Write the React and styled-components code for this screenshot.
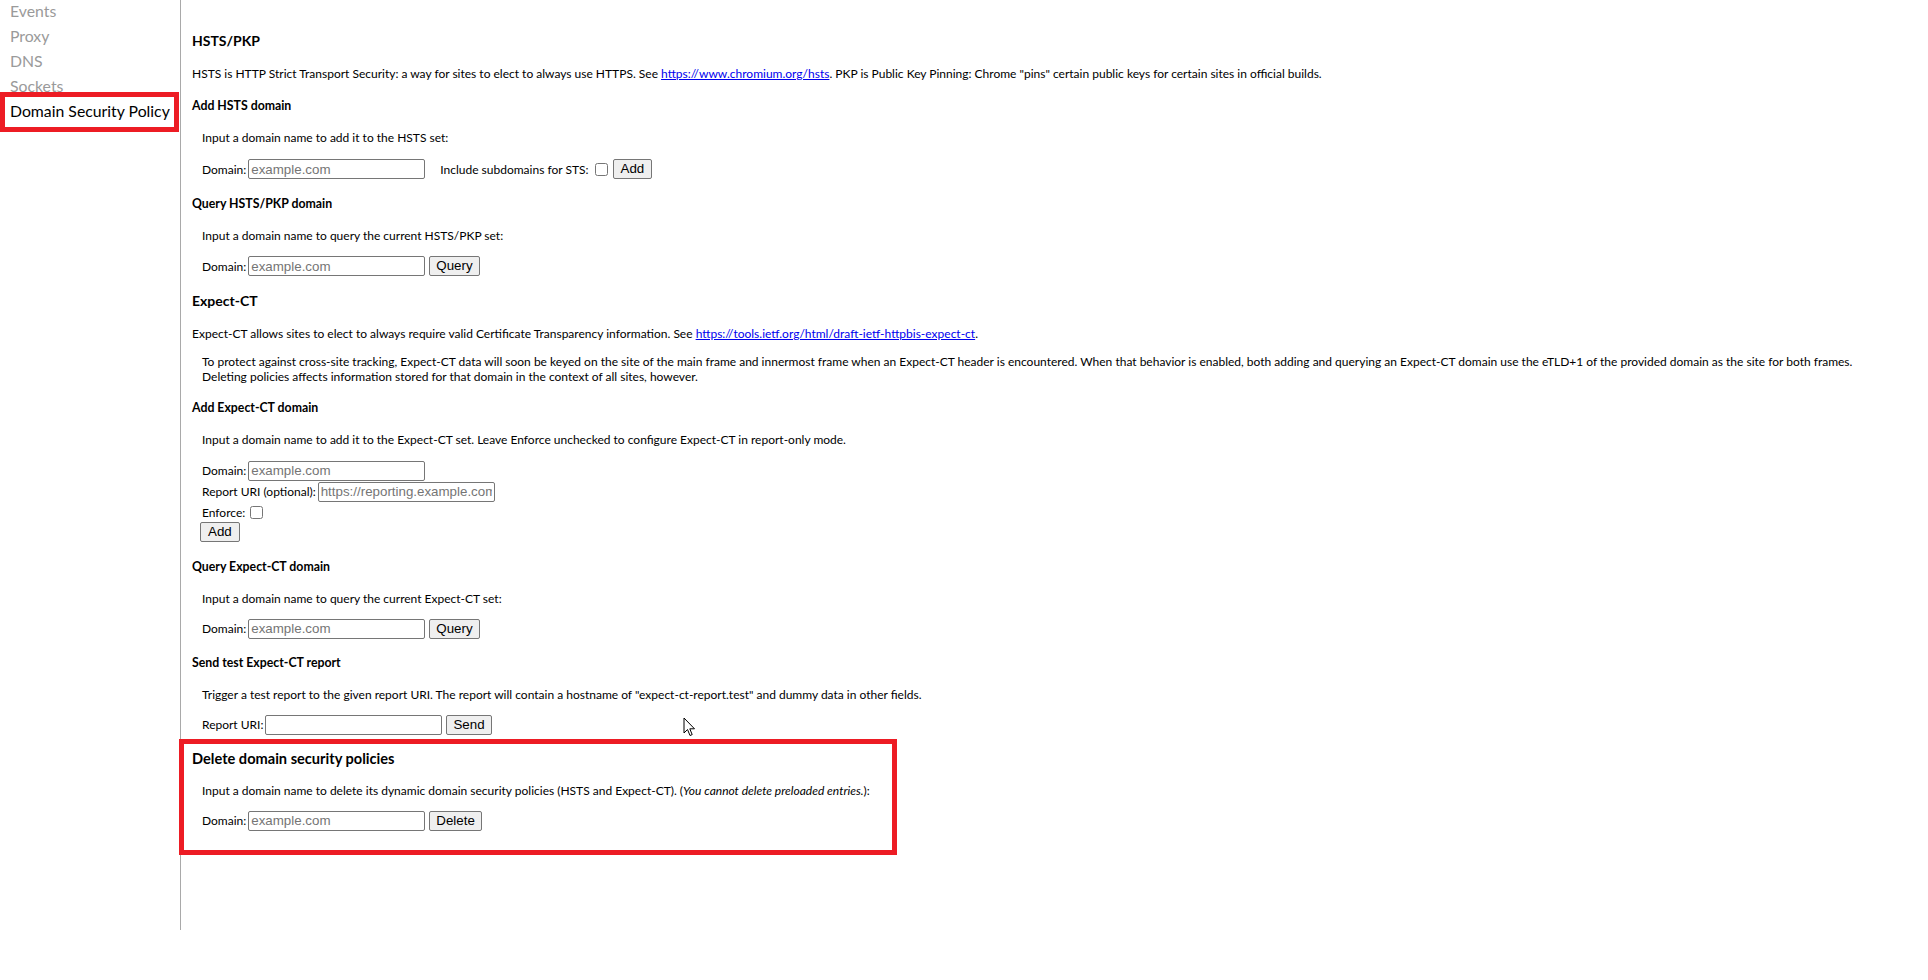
import React from 'react';
import styled, { createGlobalStyle } from 'styled-components';

const Global = createGlobalStyle`
  html, body { margin: 0; padding: 0; background: #ffffff; }
  body { font-family: Lato, "Noto Sans", sans-serif; color: #000; }
`;

const Page = styled.div`
  position: relative;
  display: flex;
  align-items: flex-start;
  width: 1928px;
  height: 980px;
  overflow: hidden;
`;

const Sidebar = styled.nav`
  flex: none;
  width: 181px;
  height: 930px;
  box-sizing: border-box;
  border-right: 1px solid #a9a9a9;
`;

const NavList = styled.div`
  margin-top: -2px;
`;

const NavItem = styled.div`
  position: relative;
  padding-left: 10px;
  font-size: 15.8px;
  line-height: 25px;
  white-space: nowrap;
  color: ${(p) => (p.$active ? '#000' : '#9a9a9a')};
`;

const Highlight = styled.div`
  position: absolute;
  box-sizing: border-box;
  border: 5px solid #ed1c24;
  pointer-events: none;
  left: ${(p) => p.$left}px;
  top: ${(p) => p.$top}px;
  width: ${(p) => p.$w}px;
  height: ${(p) => p.$h}px;
`;

const Main = styled.main`
  flex: 1;
  padding: 31px 0 0 11px;
  font-size: 12px;
`;

const H2 = styled.h2`
  margin: ${(p) => (p.$first ? 0 : 14)}px 0 0;
  font-size: 14px;
  font-weight: 700;
  line-height: 20px;
`;

const H3 = styled.h3`
  margin: ${(p) => p.$mt ?? 16}px 0 0;
  font-size: ${(p) => p.$size ?? 12.3}px;
  font-weight: 700;
  line-height: 16px;
`;

const Text = styled.p`
  margin: ${(p) => p.$mt ?? 16}px 0 0;
  padding-left: ${(p) => (p.$indent ? 10 : 0)}px;
  font-size: 12px;
  line-height: 15px;
  white-space: nowrap;
`;

const Link = styled.a`
  color: #0000ee;
  text-decoration: underline;
`;

const Section = styled.section`
  position: relative;
`;

const Row = styled.div`
  display: flex;
  align-items: center;
  height: ${(p) => p.$h ?? 22}px;
  margin-top: ${(p) => p.$mt ?? 12}px;
  padding-left: ${(p) => p.$pl ?? 10}px;
  font-size: 12px;
  white-space: nowrap;
`;

const Label = styled.span`
  margin-left: ${(p) => p.$ml ?? 0}px;
  margin-right: 2px;
`;

const Field = styled.input`
  box-sizing: border-box;
  width: 177px;
  height: 20px;
  margin: 0;
  padding: 1px 2px;
  border: 1px solid #767676;
  border-radius: 2px;
  font-family: "Liberation Sans", Arial, sans-serif;
  font-size: 13.33px;
  color: #000;
  background: #fff;
  &::placeholder { color: #757575; }
`;

const Check = styled.input`
  width: 13px;
  height: 13px;
  margin: 0 ${(p) => p.$mr ?? 0}px 0 ${(p) => p.$ml ?? 4}px;
`;

const Button = styled.button`
  box-sizing: border-box;
  height: 20px;
  margin: 0 0 0 ${(p) => p.$ml ?? 4}px;
  padding: 0 ${(p) => p.$px ?? 6}px;
  border: 1px solid #767676;
  border-radius: 2px;
  background: #efefef;
  font-family: "Liberation Sans", Arial, sans-serif;
  font-size: 13.33px;
  color: #000;
  line-height: 18px;
`;

const Cursor = styled.svg`
  position: absolute;
  left: 683px;
  top: 717px;
`;

const navItems = ['Events', 'Proxy', 'DNS', 'Sockets', 'Domain Security Policy'];

export default function App() {
  return (
    <>
      <Global />
      <Page>
        <Sidebar>
          <NavList>
            {navItems.map((n, i) => (
              <NavItem key={n} $active={i === navItems.length - 1}>
                {n}
                {i === navItems.length - 1 && <Highlight $left={0} $top={-6} $w={179} $h={40} />}
              </NavItem>
            ))}
          </NavList>
        </Sidebar>
        <Main>
          <H2 $first>HSTS/PKP</H2>
          <Text $mt={15}>
            HSTS is HTTP Strict Transport Security: a way for sites to elect to always use HTTPS. See{' '}
            <Link href="#">https://www.chromium.org/hsts</Link>. PKP is Public Key Pinning: Chrome "pins" certain
            public keys for certain sites in official builds.
          </Text>

          <H3 $mt={17}>Add HSTS domain</H3>
          <Text $indent>Input a domain name to add it to the HSTS set:</Text>
          <Row $mt={13}>
            <Label>Domain:</Label>
            <Field placeholder="example.com" />
            <Label $ml={15}>Include subdomains for STS:</Label>
            <Check type="checkbox" $mr={5} />
            <Button $ml={0} $px={7}>Add</Button>
          </Row>

          <H3 $mt={16}>Query HSTS/PKP domain</H3>
          <Text $indent>Input a domain name to query the current HSTS/PKP set:</Text>
          <Row>
            <Label>Domain:</Label>
            <Field placeholder="example.com" />
            <Button>Query</Button>
          </Row>

          <H2>Expect-CT</H2>
          <Text $mt={15}>
            Expect-CT allows sites to elect to always require valid Certificate Transparency information. See{' '}
            <Link href="#">https://tools.ietf.org/html/draft-ietf-httpbis-expect-ct</Link>.
          </Text>
          <Text $indent $mt={13}>
            To protect against cross-site tracking, Expect-CT data will soon be keyed on the site of the main frame and
            innermost frame when an Expect-CT header is encountered. When that behavior is enabled, both adding and
            querying an Expect-CT domain use the eTLD+1 of the provided domain as the site for both frames.
            <br />
            Deleting policies affects information stored for that domain in the context of all sites, however.
          </Text>

          <H3>Add Expect-CT domain</H3>
          <Text $indent>
            Input a domain name to add it to the Expect-CT set. Leave Enforce unchecked to configure Expect-CT in
            report-only mode.
          </Text>
          <Row $mt={13} $h={21}>
            <Label>Domain:</Label>
            <Field placeholder="example.com" />
          </Row>
          <Row $mt={0} $h={21}>
            <Label>Report URI (optional):</Label>
            <Field placeholder="https://reporting.example.com" />
          </Row>
          <Row $mt={0} $h={20}>
            <Label>Enforce:</Label>
            <Check type="checkbox" $ml={3} />
          </Row>
          <Row $mt={0} $h={20} $pl={8}>
            <Button $ml={0} $px={7}>Add</Button>
          </Row>

          <H3 $mt={17}>Query Expect-CT domain</H3>
          <Text $indent>Input a domain name to query the current Expect-CT set:</Text>
          <Row $h={21}>
            <Label>Domain:</Label>
            <Field placeholder="example.com" />
            <Button>Query</Button>
          </Row>

          <H3>Send test Expect-CT report</H3>
          <Text $indent>
            Trigger a test report to the given report URI. The report will contain a hostname of
            "expect-ct-report.test" and dummy data in other fields.
          </Text>
          <Row $h={21}>
            <Label>Report URI:</Label>
            <Field />
            <Button>Send</Button>
          </Row>

          <Section>
            <H3 $size={14.6}>Delete domain security policies</H3>
            <Text $indent>
              Input a domain name to delete its dynamic domain security policies (HSTS and Expect-CT). (
              <i>You cannot delete preloaded entries.</i>):
            </Text>
            <Row $mt={12} $h={21}>
              <Label>Domain:</Label>
              <Field placeholder="example.com" />
              <Button>Delete</Button>
            </Row>
            <Highlight $left={-13} $top={-12} $w={718} $h={116} />
          </Section>
        </Main>
        <Cursor width="14" height="21" viewBox="0 0 14 21">
          <path
            d="M1 1 L1 16 L4.5 12.5 L7 18.5 L9.2 17.6 L6.8 11.8 L11.5 11.8 Z"
            fill="#fff"
            stroke="#000"
            strokeWidth="1"
            strokeLinejoin="round"
          />
        </Cursor>
      </Page>
    </>
  );
}
